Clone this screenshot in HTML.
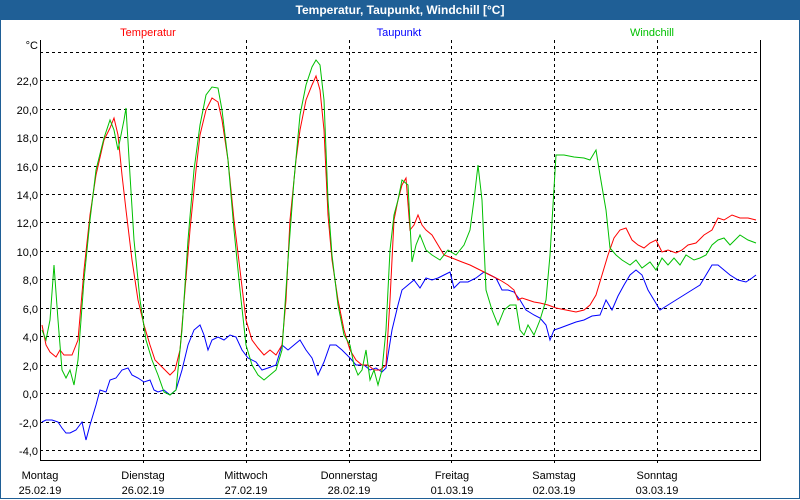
<!DOCTYPE html>
<html><head><meta charset="utf-8"><style>
body{margin:0;width:800px;height:500px;overflow:hidden;background:#fff;font-family:"Liberation Sans",sans-serif;}
#t{position:absolute;left:0;top:0;width:800px;height:20px;background:#1f5f96;color:#fff;font-weight:bold;font-size:12px;line-height:20px;text-align:center;}
#fr{position:absolute;left:0;top:20px;width:798px;height:478px;border:1px solid #1f5f96;border-top:none;}
</style></head><body>
<div id="t">Temperatur, Taupunkt, Windchill [°C]</div>
<div id="fr"></div>
<svg width="800" height="500" style="position:absolute;left:0;top:0" font-family="Liberation Sans, sans-serif" font-size="11">
<g stroke="#000" stroke-dasharray="3,3" stroke-width="1">
<line x1="40" y1="52.5" x2="760" y2="52.5"/><line x1="40" y1="80.5" x2="760" y2="80.5"/><line x1="40" y1="109.5" x2="760" y2="109.5"/><line x1="40" y1="137.5" x2="760" y2="137.5"/><line x1="40" y1="166.5" x2="760" y2="166.5"/><line x1="40" y1="194.5" x2="760" y2="194.5"/><line x1="40" y1="222.5" x2="760" y2="222.5"/><line x1="40" y1="251.5" x2="760" y2="251.5"/><line x1="40" y1="279.5" x2="760" y2="279.5"/><line x1="40" y1="308.5" x2="760" y2="308.5"/><line x1="40" y1="336.5" x2="760" y2="336.5"/><line x1="40" y1="365.5" x2="760" y2="365.5"/><line x1="40" y1="393.5" x2="760" y2="393.5"/><line x1="40" y1="422.5" x2="760" y2="422.5"/><line x1="40" y1="450.5" x2="760" y2="450.5"/>
<line x1="143.5" y1="40" x2="143.5" y2="465"/><line x1="246.5" y1="40" x2="246.5" y2="465"/><line x1="349.5" y1="40" x2="349.5" y2="465"/><line x1="451.5" y1="40" x2="451.5" y2="465"/><line x1="554.5" y1="40" x2="554.5" y2="465"/><line x1="657.5" y1="40" x2="657.5" y2="465"/>
</g>
<path d="M40.5 40V460.5H760.5V40" fill="none" stroke="#000"/>
<g text-anchor="end" fill="#000"><text x="38" y="49">°C</text><text x="38" y="85">22,0</text><text x="38" y="114">20,0</text><text x="38" y="142">18,0</text><text x="38" y="171">16,0</text><text x="38" y="199">14,0</text><text x="38" y="227">12,0</text><text x="38" y="256">10,0</text><text x="38" y="284">8,0</text><text x="38" y="313">6,0</text><text x="38" y="341">4,0</text><text x="38" y="370">2,0</text><text x="38" y="398">0,0</text><text x="38" y="427">-2,0</text><text x="38" y="455">-4,0</text></g>
<g text-anchor="middle" fill="#000"><text x="40" y="479">Montag</text><text x="40" y="494">25.02.19</text><text x="143" y="479">Dienstag</text><text x="143" y="494">26.02.19</text><text x="246" y="479">Mittwoch</text><text x="246" y="494">27.02.19</text><text x="349" y="479">Donnerstag</text><text x="349" y="494">28.02.19</text><text x="452" y="479">Freitag</text><text x="452" y="494">01.03.19</text><text x="554" y="479">Samstag</text><text x="554" y="494">02.03.19</text><text x="657" y="479">Sonntag</text><text x="657" y="494">03.03.19</text></g>
<text x="148" y="36" fill="#f00" text-anchor="middle">Temperatur</text>
<text x="399" y="36" fill="#00f" text-anchor="middle">Taupunkt</text>
<text x="652" y="36" fill="#00c000" text-anchor="middle">Windchill</text>
<g fill="none" stroke-width="1">
<polyline stroke="#00f" points="42,422 46,420 52,420 58,422 62,428 66,433 70,433 76,430 82,422 86,440 90,425 96,405 100,390 106,392 110,380 116,378 122,370 128,368 132,375 138,378 144,382 150,380 154,390 158,392 164,390 170,395 176,390 182,370 188,345 194,330 200,325 204,335 208,350 212,340 218,337 224,340 230,335 236,337 242,350 248,358 256,362 262,370 268,368 276,365 282,345 288,350 294,345 300,340 306,350 312,358 318,375 324,362 330,345 336,345 342,350 350,358 356,365 364,365 370,370 376,368 382,372 386,368 392,330 398,305 402,290 408,285 414,280 420,288 426,278 432,280 438,278 444,275 450,272 454,288 460,282 468,282 476,278 484,272 490,275 496,278 502,290 508,290 514,292 520,300 526,310 534,315 540,318 546,325 550,340 554,330 560,328 568,325 576,322 584,320 592,316 600,315 606,300 612,310 618,296 624,285 630,275 636,270 642,275 648,290 654,300 660,310 668,305 676,300 684,295 692,290 700,285 706,275 712,265 718,265 724,270 730,275 738,280 746,282 752,278 756,275"/>
<polyline stroke="#f00" points="42,325 46,345 50,352 56,357 60,350 64,355 72,355 78,340 84,270 90,215 96,175 104,140 110,128 114,118 118,135 122,175 126,210 132,260 138,300 144,325 150,345 155,360 160,365 165,370 170,375 175,370 180,350 185,290 190,230 196,170 200,135 206,110 212,98 218,102 222,120 228,160 234,220 240,270 246,320 252,340 258,348 264,355 270,350 276,355 282,345 286,300 290,220 296,160 300,130 306,100 312,85 316,76 320,90 324,130 328,215 332,260 338,300 344,330 350,350 356,360 362,365 368,365 374,370 380,370 386,365 390,300 394,220 398,200 402,185 406,178 410,230 414,225 418,215 422,225 426,230 432,235 438,245 444,255 452,258 462,262 470,265 480,270 490,275 500,280 508,285 514,290 518,300 522,298 528,300 534,302 540,303 548,305 556,308 566,310 576,312 584,310 590,305 596,295 602,275 608,255 614,238 620,230 626,228 632,240 638,245 644,248 650,243 656,240 662,252 668,250 676,253 682,250 688,245 696,243 704,235 712,230 718,218 724,220 732,215 740,218 748,218 756,220"/>
<polyline stroke="#00c000" points="42,330 46,340 50,320 54,265 58,320 62,370 66,378 70,370 74,385 78,360 84,280 90,220 96,170 104,138 110,120 114,130 118,150 124,120 126,108 130,175 134,240 140,300 146,340 152,360 158,375 164,392 170,395 176,390 182,330 188,240 194,170 200,125 206,95 212,87 218,88 222,110 228,160 234,230 240,290 246,345 252,365 258,375 264,380 270,375 276,370 282,350 288,260 294,180 300,115 306,85 312,67 316,60 320,65 324,100 328,200 332,255 338,305 344,335 350,345 354,365 358,375 362,370 366,350 370,380 374,370 378,385 382,370 386,330 390,250 394,215 398,200 402,180 408,185 412,262 416,245 420,235 426,250 432,255 440,260 448,250 456,255 464,245 470,230 474,200 478,165 482,200 486,290 492,310 498,325 504,310 510,305 516,305 520,330 524,335 528,325 534,335 540,320 546,300 550,255 556,155 564,155 574,157 584,158 590,160 596,150 600,175 606,210 610,248 616,255 622,260 630,265 636,260 642,268 650,262 656,270 662,258 668,265 674,258 680,265 686,255 694,260 700,258 706,255 712,245 718,240 724,238 730,245 740,235 748,240 756,243"/>
</g>
</svg>
</body></html>
